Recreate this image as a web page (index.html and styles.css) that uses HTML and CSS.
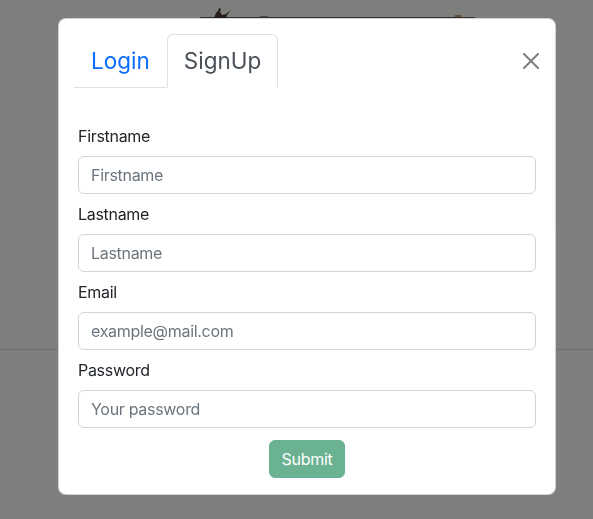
FILE: index.html
```html
<!DOCTYPE html>
<html lang="en">
<head>
<meta charset="utf-8">
<title>Sign up</title>
<link rel="stylesheet" href="styles.css">
</head>
<body>
<div class="page">
  <section class="hero">
    <svg class="hero-pic" width="280" height="14" viewBox="0 0 280 14" aria-hidden="true">
      <rect x="0" y="11" width="275" height="1" fill="#6a5e54"/>
      <path d="M14 12 L16 7 L18 5 L19 2 L21 3 L20 6 L22 9 L26 8 L31 4 L27 9 L26 12 Z" fill="#4a3c34"/>
      <rect x="60" y="10" width="8" height="1" fill="#a09890"/>
      <rect x="255" y="9" width="6" height="2" fill="#c0a070"/>
    </svg>
  </section>
  <section class="main"></section>
</div>
<div class="backdrop"></div>
<div class="modal">
  <div class="modal-header">
    <ul class="tabs">
      <li><a class="tab">Login</a></li>
      <li><a class="tab active">SignUp</a></li>
    </ul>
    <button class="close" type="button" aria-label="Close">
      <svg width="16" height="16" viewBox="0 0 16 16"><path d="M.293.293a1 1 0 0 1 1.414 0L8 6.586 14.293.293a1 1 0 1 1 1.414 1.414L9.414 8l6.293 6.293a1 1 0 0 1-1.414 1.414L8 9.414l-6.293 6.293a1 1 0 0 1-1.414-1.414L6.586 8 .293 1.707a1 1 0 0 1 0-1.414z" fill="#000"/></svg>
    </button>
  </div>
  <div class="modal-body">
    <form class="form">
      <label class="label" for="fn">Firstname</label>
      <input class="input" id="fn" type="text" placeholder="Firstname">
      <label class="label" for="ln">Lastname</label>
      <input class="input" id="ln" type="text" placeholder="Lastname">
      <label class="label" for="em">Email</label>
      <input class="input" id="em" type="email" placeholder="example@mail.com">
      <label class="label" for="pw">Password</label>
      <input class="input" id="pw" type="password" placeholder="Your password">
      <button class="submit" type="button">Submit</button>
    </form>
  </div>
</div>
</body>
</html>
```

FILE: styles.css
```css
* { box-sizing: border-box; }
html, body {
  margin: 0;
  height: 100%;
  overflow: hidden;
}
body {
  background: #ffffff;
  font-family: Inter, "Noto Sans", sans-serif;
  color: #212529;
  font-size: 16px;
  line-height: 24px;
}
.hero {
  height: 230px;
  background: #fafefa;
}
.hero-pic {
  display: block;
  margin-left: 200px;
  padding-top: 6px;
  height: 20px;
}
.main {
  height: 120px;
  border-bottom: 1px solid #dedede;
}
.backdrop {
  position: fixed;
  inset: 0;
  background: rgba(0, 0, 0, 0.5);
}
.modal {
  position: fixed;
  top: 18px;
  left: 58px;
  width: 498px;
  background: #fff;
  border: 1px solid rgba(0, 0, 0, 0.175);
  border-radius: 8px;
}
.modal-header {
  display: flex;
  align-items: center;
  justify-content: space-between;
  padding: 15px 15px 16px 15px;
}
.tabs {
  display: flex;
  list-style: none;
  margin: 0;
  padding: 0;
  border-bottom: 1px solid #dee2e6;
}
.tab {
  display: block;
  padding: 8px 16px;
  font-size: 22.5px;
  line-height: 36px;
  color: #0d6efd;
  border: 1px solid transparent;
  border-top-left-radius: 6px;
  border-top-right-radius: 6px;
  margin-bottom: -1px;
}
.tab.active {
  color: #495057;
  background: #fff;
  border-color: #dee2e6 #dee2e6 #fff;
}
.close {
  width: 16px;
  height: 16px;
  padding: 0;
  margin: 0 1px 0 0;
  border: 0;
  background: transparent;
  opacity: 0.5;
  display: flex;
}
.modal-body {
  padding: 20px 19px 16px 19px;
}
.form {
  display: flex;
  flex-direction: column;
  gap: 8px;
}
.label {
  display: block;
  font-size: 16px;
  line-height: 24px;
  letter-spacing: -0.3px;
}
.input {
  display: block;
  width: 100%;
  height: 38px;
  padding: 6px 12px;
  font-family: Inter, "Noto Sans", sans-serif;
  font-size: 16px;
  line-height: 24px;
  color: #212529;
  border: 1px solid #ced4da;
  border-radius: 6px;
  letter-spacing: -0.3px;
  background: #fff;
}
.input::placeholder {
  color: #6c757d;
}
.submit {
  align-self: center;
  margin-top: 4px;
  padding: 6px 12px;
  font-family: Inter, "Noto Sans", sans-serif;
  font-size: 16px;
  line-height: 24px;
  color: #fff;
  background: #6ab291;
  border: 1px solid #6ab291;
  border-radius: 6px;
  letter-spacing: -0.3px;
}
```
